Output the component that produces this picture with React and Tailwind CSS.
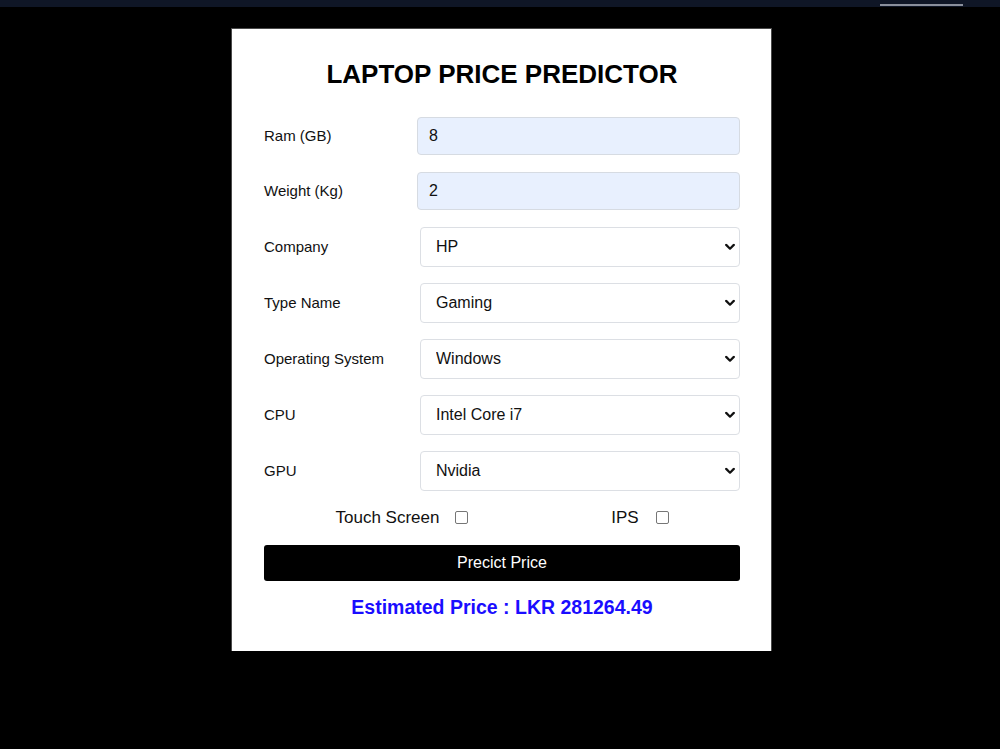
import { useState } from "react";

const companies = ["Apple", "HP", "Dell", "Lenovo", "Asus", "Acer", "MSI"];
const types = ["Ultrabook", "Notebook", "Gaming", "2 in 1 Convertible", "Workstation"];
const systems = ["Windows", "Mac", "Linux", "Other"];
const cpus = ["Intel Core i3", "Intel Core i5", "Intel Core i7", "AMD Processor", "Other Intel Processor"];
const gpus = ["Intel", "Nvidia", "AMD"];

function Chevron() {
  return (
    <svg
      className="pointer-events-none absolute right-[5px] top-1/2 -translate-y-1/2"
      width="10"
      height="7"
      viewBox="0 0 10 7"
      fill="none"
    >
      <path d="M1.2 1.4 5 5.2l3.8-3.8" stroke="#111" strokeWidth="2.2" strokeLinecap="round" strokeLinejoin="round" />
    </svg>
  );
}

function TextRow({ label, value, onChange }) {
  return (
    <div className="flex items-center h-[38px]">
      <label className="w-[153px] text-[15px] text-[#111]">{label}</label>
      <input
        value={value}
        onChange={(e) => onChange(e.target.value)}
        className="flex-1 h-[38px] px-[11px] bg-[#e8f0fe] border border-[#d6dbe2] rounded-[4px] text-[16px] text-[#111] outline-none"
      />
    </div>
  );
}

function SelectRow({ label, value, options, onChange }) {
  return (
    <div className="flex items-center h-[40px]">
      <label className="w-[156px] text-[15px] text-[#111]">{label}</label>
      <div className="relative flex-1">
        <select
          value={value}
          onChange={(e) => onChange(e.target.value)}
          className="w-full h-[40px] pl-[15px] pr-8 appearance-none bg-white border border-[#dcdfe4] rounded-[4px] text-[16px] text-[#111] outline-none"
        >
          {options.map((o) => (
            <option key={o}>{o}</option>
          ))}
        </select>
        <Chevron />
      </div>
    </div>
  );
}

export default function App() {
  const [form, setForm] = useState({
    ram: "8",
    weight: "2",
    company: "HP",
    type: "Gaming",
    os: "Windows",
    cpu: "Intel Core i7",
    gpu: "Nvidia",
    touch: false,
    ips: false,
  });
  const set = (key) => (v) => setForm((prev) => ({ ...prev, [key]: v }));

  return (
    <div className="min-h-[749px] bg-black font-['Liberation_Sans',Arial,sans-serif]">
      {/* top strip */}
      <div className="h-[7px] bg-[#0f1626] flex justify-end pr-[37px] pt-[4px]">
        <div className="w-[83px] h-[2px] bg-[#8a8f9c]" />
      </div>

      <div className="flex justify-center pt-[21px] pl-[3px]">
        <div className="w-[541px] bg-white border-t border-l border-r border-[#4a4a4a] pt-[29px] pb-[32px] pl-[32px] pr-[31px]">
          <h1 className="text-center text-[26px] font-bold text-black leading-[32px]">LAPTOP PRICE PREDICTOR</h1>

          <div className="mt-[27px] flex flex-col gap-[17px]">
            <TextRow label="Ram (GB)" value={form.ram} onChange={set("ram")} />
            <TextRow label="Weight (Kg)" value={form.weight} onChange={set("weight")} />
          </div>

          <div className="mt-[17px] flex flex-col gap-[16px]">
            <SelectRow label="Company" value={form.company} options={companies} onChange={set("company")} />
            <SelectRow label="Type Name" value={form.type} options={types} onChange={set("type")} />
            <SelectRow label="Operating System" value={form.os} options={systems} onChange={set("os")} />
            <SelectRow label="CPU" value={form.cpu} options={cpus} onChange={set("cpu")} />
            <SelectRow label="GPU" value={form.gpu} options={gpus} onChange={set("gpu")} />
          </div>

          <div className="mt-[15px] flex h-[24px] items-center text-[17px] text-[#111]">
            <label className="flex w-1/2 items-center justify-center gap-[16px] pl-[38px]">
              Touch Screen
              <input
                type="checkbox"
                checked={form.touch}
                onChange={(e) => set("touch")(e.target.checked)}
                className="w-[13px] h-[13px] -mt-[2px] appearance-none border border-[#767676] rounded-[2px] bg-white"
              />
            </label>
            <label className="flex w-1/2 items-center justify-center gap-[17px] pl-[38px]">
              IPS
              <input
                type="checkbox"
                checked={form.ips}
                onChange={(e) => set("ips")(e.target.checked)}
                className="w-[13px] h-[13px] -mt-[2px] appearance-none border border-[#767676] rounded-[2px] bg-white"
              />
            </label>
          </div>

          <button className="mt-[15px] w-full h-[36px] bg-black text-white text-[16px] rounded-[3px]">
            Precict Price
          </button>

          <p className="mt-[14px] text-center text-[19.5px] font-bold text-[#1a0dff] leading-[24px]">
            Estimated Price : LKR 281264.49
          </p>
        </div>
      </div>
    </div>
  );
}
